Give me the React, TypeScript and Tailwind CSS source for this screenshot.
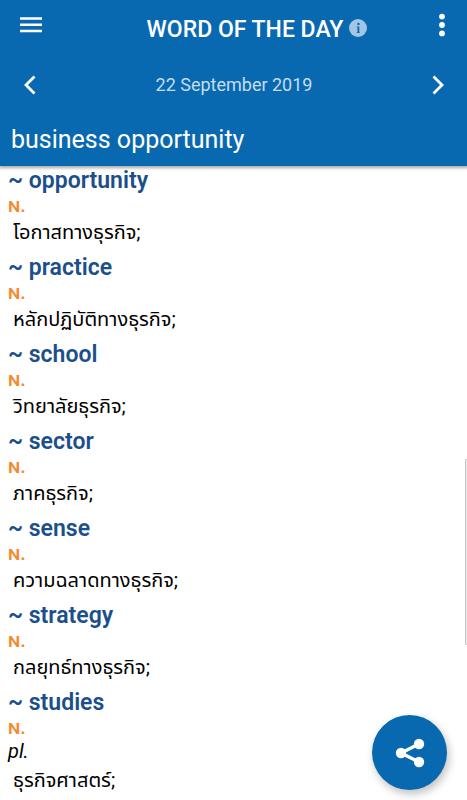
interface Entry {
  word: string;
  pos: string;
  note?: string;
  translation: string;
}

const entries: Entry[] = [
  { word: "opportunity", pos: "n.", translation: "โอกาสทางธุรกิจ;" },
  { word: "practice", pos: "n.", translation: "หลักปฏิบัติทางธุรกิจ;" },
  { word: "school", pos: "n.", translation: "วิทยาลัยธุรกิจ;" },
  { word: "sector", pos: "n.", translation: "ภาคธุรกิจ;" },
  { word: "sense", pos: "n.", translation: "ความฉลาดทางธุรกิจ;" },
  { word: "strategy", pos: "n.", translation: "กลยุทธ์ทางธุรกิจ;" },
  { word: "studies", pos: "n.", note: "pl.", translation: "ธุรกิจศาสตร์;" },
];

export default function App() {
  return (
    <div className="min-h-screen bg-white font-['Roboto','Noto_Sans_Thai','Noto_Sans',sans-serif]">
      {/* Header */}
      <header className="relative bg-[#0969b0] text-white shadow-[0_1px_3px_1px_rgba(0,0,0,0.35)]">
        <div className="flex h-14 items-center pr-[7px] pl-[15px]">
          <button type="button" aria-label="Menu" className="flex size-8 items-center justify-center pb-1.5">
            <svg viewBox="0 0 22 16" className="h-4 w-[22px]" fill="currentColor">
              <path d="M0 .2h22v2.6H0zM0 6.4h22V9H0zM0 12.7h22v2.6H0z" />
            </svg>
          </button>
          <div className="flex flex-1 items-center justify-center gap-1.5 pt-1 pl-[43px]">
            <h1 className="text-[23px] leading-8 font-medium">WORD OF THE DAY</h1>
            <button type="button" aria-label="About word of the day" className="pb-1 text-[#a2c7e4]">
              <svg viewBox="0 0 18 18" className="size-[18px]">
                <circle cx="9" cy="9" r="9" fill="currentColor" />
                <circle cx="9.4" cy="5" r="1.2" fill="#0969b0" />
                <path d="M7.8 7.4h2.5v5.8h.5v.8H7.8v-.8h.7V8.2h-.7z" fill="#0969b0" />
              </svg>
            </button>
          </div>
          <button type="button" aria-label="More options" className="flex size-9 items-center justify-center pb-1.5">
            <svg viewBox="0 0 6 24" className="h-6 w-[6px]" fill="currentColor">
              <circle cx="3" cy="3.6" r="2.9" />
              <circle cx="3" cy="12" r="2.9" />
              <circle cx="3" cy="20.4" r="2.9" />
            </svg>
          </button>
        </div>

        <div className="flex h-14 items-center justify-between pr-[11px] pl-3">
          <button type="button" aria-label="Previous day" className="flex size-9 items-center justify-center pt-0.5">
            <svg viewBox="0 0 12 20" className="h-5 w-3" fill="none" stroke="currentColor" strokeWidth="2.8">
              <path d="M10.5 1.5 2 10l8.5 8.5" />
            </svg>
          </button>
          <time dateTime="2019-09-22" className="text-[18px] text-[#c5dcee]">
            22 September 2019
          </time>
          <button type="button" aria-label="Next day" className="flex size-9 items-center justify-center pt-0.5">
            <svg viewBox="0 0 12 20" className="h-5 w-3" fill="none" stroke="currentColor" strokeWidth="2.8">
              <path d="M1.5 1.5 10 10l-8.5 8.5" />
            </svg>
          </button>
        </div>

        <h2 className="px-[11px] pt-3 pb-2.5 text-[25px] leading-8">business opportunity</h2>
      </header>

      {/* Entries */}
      <main className="px-2 pt-px">
        {entries.map((entry) => (
          <section key={entry.word} className="pb-2 last:pb-0">
            <h3 className="text-[23px] leading-7 font-semibold text-[#1b4f8c]">~ {entry.word}</h3>
            <p className="text-[20px] leading-5 font-medium text-[#f5892b] [font-variant:small-caps]">
              {entry.pos}
            </p>
            {entry.note && (
              <p className="pt-0.5 text-[20px] leading-6 text-black italic">{entry.note}</p>
            )}
            <p className="pt-1 pl-[5px] text-[20px] leading-[27px] text-black">{entry.translation}</p>
          </section>
        ))}
      </main>

      {/* Edge panel handle */}
      <div className="fixed top-[459px] right-0 h-[186px] w-[2px] rounded-l-sm border border-r-0 border-[#c4c4c4] bg-[#ececec]" />

      <button
        type="button"
        aria-label="Share"
        className="fixed right-5 bottom-[10px] flex size-[75px] items-center justify-center rounded-full bg-[#0969b0] text-white shadow-[2px_4px_9px_rgba(0,0,0,0.25)]"
      >
        <svg viewBox="0 0 30 30" className="size-[30px]" fill="currentColor">
          <path d="M24 6 6 15l18 9" fill="none" stroke="currentColor" strokeWidth="3.4" />
          <circle cx="6" cy="15" r="5.2" />
          <circle cx="24" cy="6" r="5.2" />
          <circle cx="24" cy="24" r="5.2" />
        </svg>
      </button>
    </div>
  );
}
